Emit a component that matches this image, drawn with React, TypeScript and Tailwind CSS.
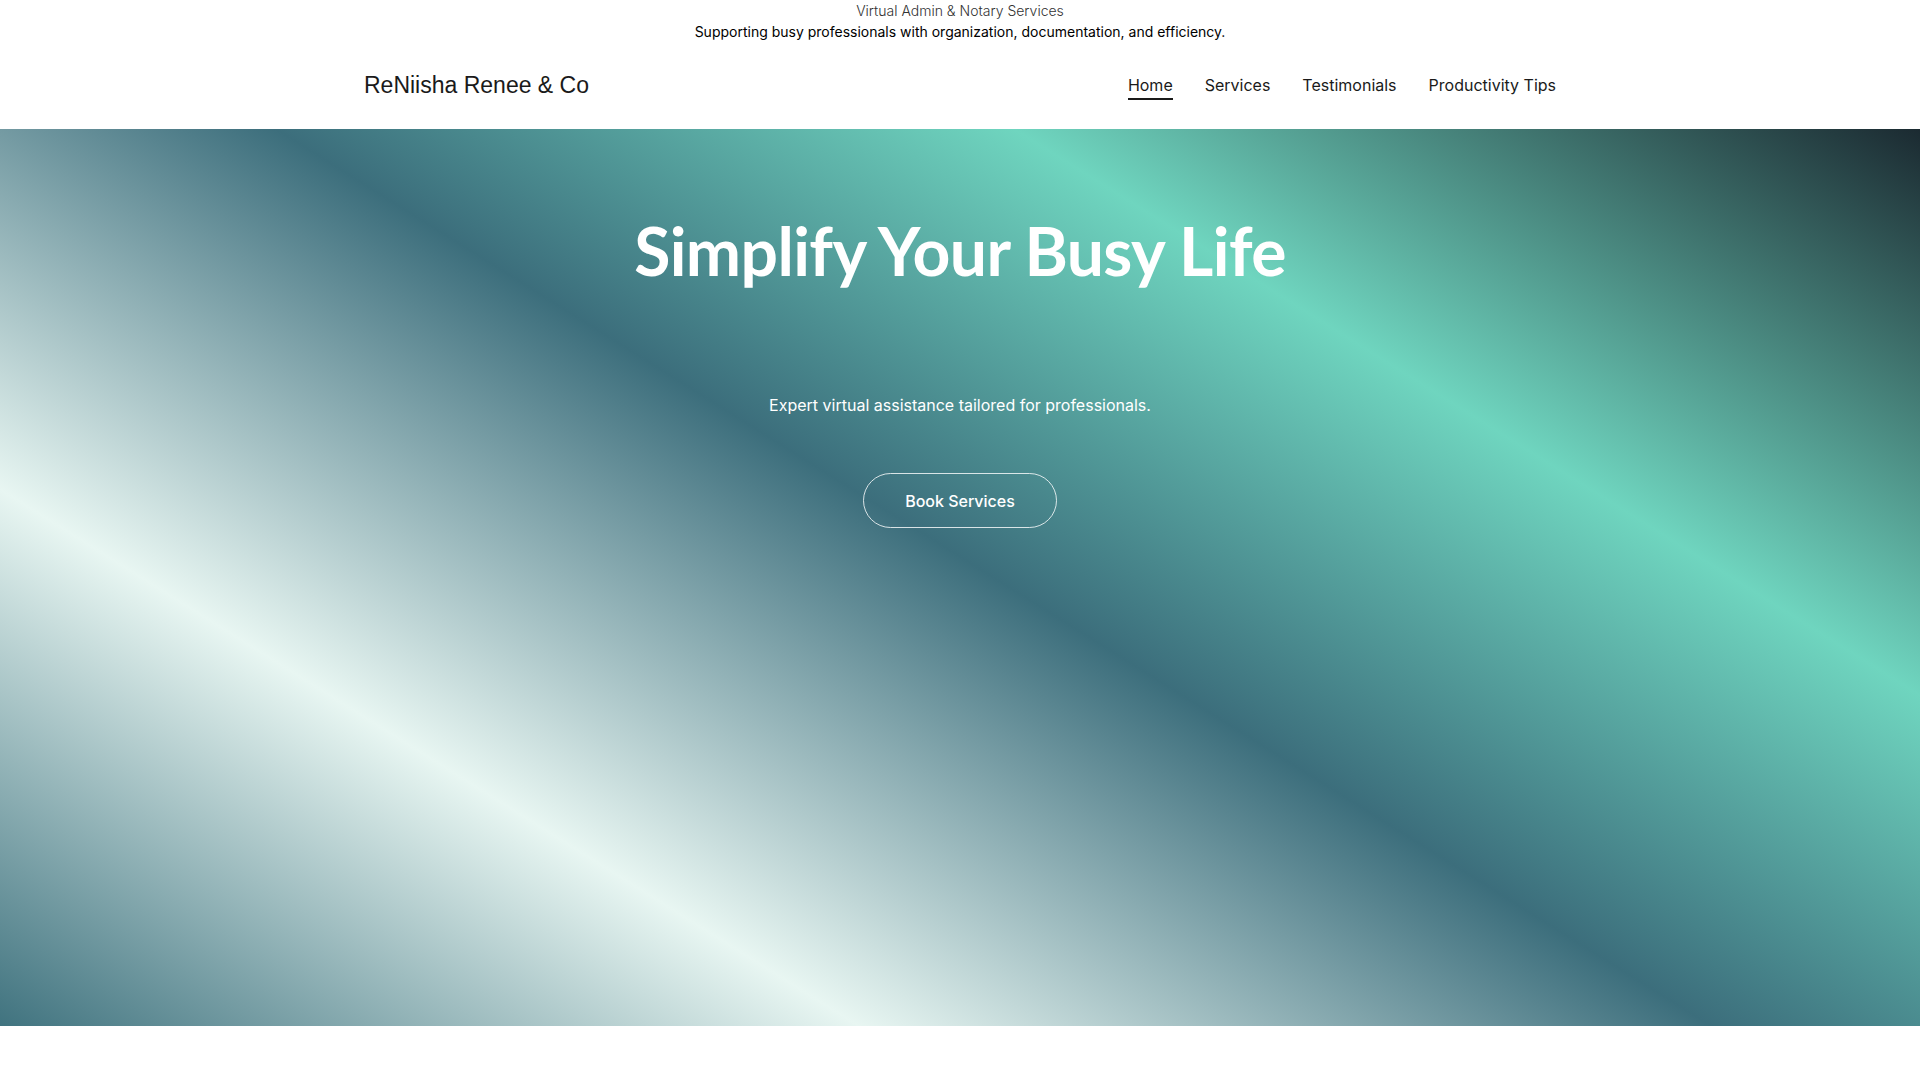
import React from "react";

export default function App() {
  return (
    <div className="min-h-screen w-full bg-white" style={{ fontFamily: "Inter, 'Noto Sans', sans-serif" }}>
      <div className="flex flex-col items-center text-[14px] leading-[21px]">
        <p className="font-light text-[#333333]">Virtual Admin &amp; Notary Services</p>
        <p className="text-black">Supporting busy professionals with organization, documentation, and efficiency.</p>
      </div>
      <header className="mx-auto flex h-[87px] max-w-[1192px] items-center justify-between pb-[1px]">
        <div className="text-[23px] text-[#1a1a1a]" style={{ fontFamily: "'Liberation Sans', Arial, sans-serif" }}>
          ReNiisha Renee &amp; Co
        </div>
        <nav className="flex items-center gap-8 text-[16px] text-[#1a1a1a]">
          <a className="relative">
            Home
            <span className="absolute left-0 right-0 top-[25px] h-[1.5px] bg-[#1a1a1a]" />
          </a>
          <a>Services</a>
          <a>Testimonials</a>
          <a>Productivity Tips</a>
        </nav>
      </header>
      <section className="flex h-[897px] flex-col items-center bg-[linear-gradient(32deg,#40737f_0%,#e8f6f2_25.6%,#3c6e7c_51%,#6fd5bf_73%,#1b2a31_100%)] text-white">
        <h1
          className="mt-[86px] text-[66px] font-bold leading-[72px] tracking-[-0.6px]"
          style={{ fontFamily: "Lato, 'Noto Sans', sans-serif" }}
        >
          Simplify Your Busy Life
        </h1>
        <p className="mt-[106px] text-[16px] leading-[24px]">Expert virtual assistance tailored for professionals.</p>
        <button className="mt-[56px] h-[55px] w-[194px] rounded-full border border-white/80 text-[16px] font-medium">
          Book Services
        </button>
      </section>
    </div>
  );
}
